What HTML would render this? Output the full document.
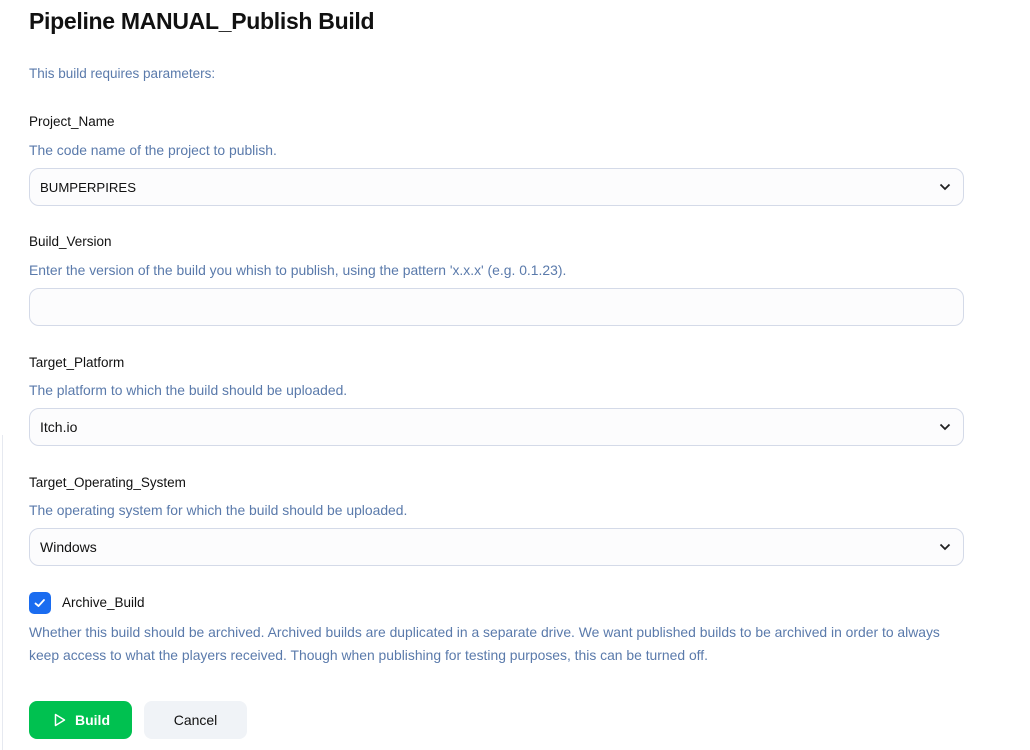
<!DOCTYPE html>
<html><head><style>
*{box-sizing:border-box;margin:0;padding:0}
body{width:1030px;height:750px;background:#fff;font-family:"Liberation Sans",sans-serif;color:#111;position:relative;overflow:hidden}
.a{position:absolute;white-space:nowrap}
h1{position:absolute;left:29px;top:8px;font-size:23px;font-weight:bold;color:#111;letter-spacing:-0.3px}
.lbl{font-size:13.5px;color:#111}
.d{font-size:13.9px;color:#5a7aab}
.in{position:absolute;left:29px;width:935px;height:38px;border:1px solid #d4dae8;border-radius:10px;background:#fcfcfd;font-size:14px;padding:10px 0 0 10px;color:#111}
.in svg{position:absolute;right:12px;top:14px}
.btn{position:absolute;top:701px;height:38px;border-radius:8px;font-size:14px;text-align:center;line-height:38px}
</style></head><body>
<div style="position:absolute;left:2px;top:435px;width:1px;height:315px;background:#e6e9f0"></div>
<h1>Pipeline MANUAL_Publish Build</h1>
<div class="a d" style="left:29px;top:66px;font-size:13.5px">This build requires parameters:</div>
<div class="a lbl" style="left:29px;top:114px">Project_Name</div>
<div class="a d" style="left:29px;top:142px">The code name of the project to publish.</div>
<div class="in" style="top:168px"><span style="font-size:13.2px">BUMPERPIRES</span><svg width="12" height="8" viewBox="0 0 12 8"><path d="M1.5 1.5L6 6 10.5 1.5" stroke="#222" stroke-width="1.8" fill="none"/></svg></div>
<div class="a lbl" style="left:29px;top:234px">Build_Version</div>
<div class="a d" style="left:29px;top:262px">Enter the version of the build you whish to publish, using the pattern 'x.x.x' (e.g. 0.1.23).</div>
<div class="in" style="top:288px"></div>
<div class="a lbl" style="left:29px;top:355px">Target_Platform</div>
<div class="a d" style="left:29px;top:382px">The platform to which the build should be uploaded.</div>
<div class="in" style="top:408px">Itch.io<svg width="12" height="8" viewBox="0 0 12 8"><path d="M1.5 1.5L6 6 10.5 1.5" stroke="#222" stroke-width="1.8" fill="none"/></svg></div>
<div class="a lbl" style="left:29px;top:475px">Target_Operating_System</div>
<div class="a d" style="left:29px;top:502px">The operating system for which the build should be uploaded.</div>
<div class="in" style="top:528px">Windows<svg width="12" height="8" viewBox="0 0 12 8"><path d="M1.5 1.5L6 6 10.5 1.5" stroke="#222" stroke-width="1.8" fill="none"/></svg></div>
<div style="position:absolute;left:29px;top:592px;width:22px;height:22px;background:#1a6cf0;border-radius:5px"><svg width="22" height="22" viewBox="0 0 22 22"><path d="M6.5 11.5L9.5 14 15 8" stroke="#fff" stroke-width="1.8" fill="none" stroke-linecap="round" stroke-linejoin="round"/></svg></div>
<div class="a lbl" style="left:62px;top:595px">Archive_Build</div>
<div class="a d" style="left:29px;top:621px;line-height:23px">Whether this build should be archived. Archived builds are duplicated in a separate drive. We want published builds to be archived in order to always<br>keep access to what the players received. Though when publishing for testing purposes, this can be turned off.</div>
<div class="btn" style="left:29px;width:103px;background:#00c150;color:#fff;font-weight:bold"><svg width="12" height="14" viewBox="0 0 12 14" style="position:absolute;left:25px;top:12px"><path d="M1.5 1.5L10.5 7 1.5 12.5Z" stroke="#fff" stroke-width="1.5" fill="none" stroke-linejoin="round"/></svg><span style="margin-left:24px">Build</span></div>
<div class="btn" style="left:144px;width:103px;background:#f0f3f7;color:#111">Cancel</div>
</body></html>
